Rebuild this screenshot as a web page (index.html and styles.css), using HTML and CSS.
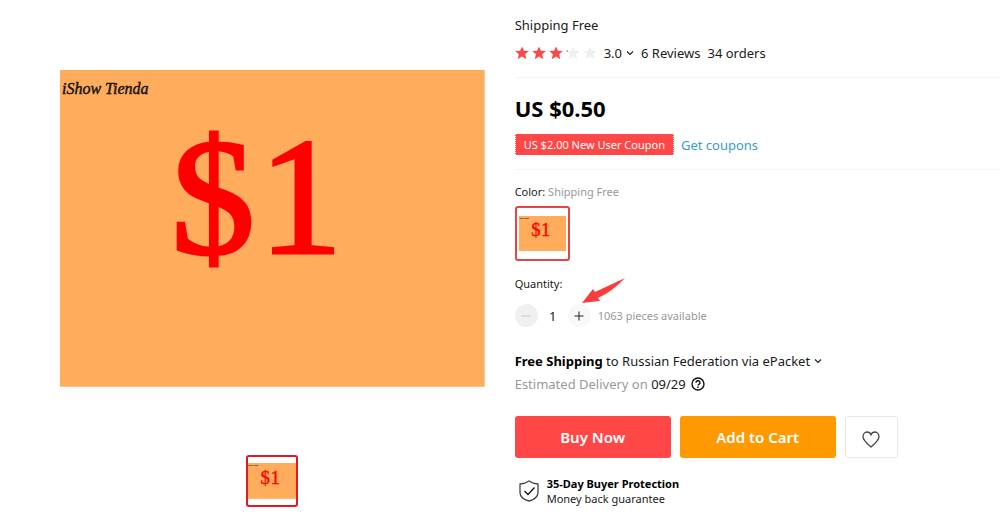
FILE: index.html
```html
<!DOCTYPE html>
<html lang="en">
<head>
	<meta charset="UTF-8">
	<meta name="viewport" content="width=device-width, initial-scale=1">
	<title>Shipping Free</title>
	<link rel="stylesheet" href="styles.css">
</head>
<body>
	<svg class="defs" aria-hidden="true">
		<symbol id="star" viewBox="0 0 14 14">
			<path d="M7 0.5l1.900 4.200 4.900 0.300-3.700 3.300 1.200 4.900L7 10.600l-4.300 2.600 1.200-4.900L0.200 5l4.900-0.300z"/>
		</symbol>
		<symbol id="down" viewBox="0 0 8 8">
			<path d="M1 2.5l3 3 3-3" fill="none" stroke="#222" stroke-width="1.2"/>
		</symbol>
	</svg>
	<main class="product">
		<section class="gallery">
			<svg class="picture" viewBox="0 0 425 317" role="img" aria-label="Shipping Free">
				<g id="card">
					<rect width="425" height="317" fill="#ffac5c"/>
					<text class="card-shop" x="2" y="24">iShow Tienda</text>
					<text class="card-price" x="111 199" y="183">$1</text>
				</g>
			</svg>
			<button class="thumb" aria-label="Picture 1"><svg viewBox="0 0 425 317"><use href="#card"/></svg></button>
		</section>
		<section class="info">
			<header class="block">
				<h1 class="title">Shipping Free</h1>
				<div class="rating">
					<div class="stars">
						<svg><use href="#star"/></svg>
						<svg><use href="#star"/></svg>
						<svg><use href="#star"/></svg>
						<svg class="off"><use href="#star"/><path class="part" d="M0 4.500h2v1.500z"/></svg>
						<svg class="off"><use href="#star"/></svg>
					</div>
					<button class="drop">3.0<svg><use href="#down"/></svg></button>
					<span>6 Reviews</span>
					<span>34 orders</span>
				</div>
			</header>
			<div class="block offer">
				<div class="price">US $0.50</div>
				<div class="coupons">
					<span class="coupon">US $2.00 New User Coupon</span>
					<a href="#">Get coupons</a>
				</div>
			</div>
			<div class="label">Color: <span class="gray">Shipping Free</span></div>
			<button class="swatch" aria-label="Shipping Free"><svg viewBox="0 0 425 317"><use href="#card"/></svg></button>
			<label class="label" for="count">Quantity:</label>
			<div class="quantity">
				<button class="step minus" aria-label="Less" disabled>
					<svg viewBox="0 0 10 10"><path d="M0 5h10"/></svg>
				</button>
				<input id="count" class="count" type="text" value="1">
				<button class="step" aria-label="More">
					<svg viewBox="0 0 10 10"><path d="M0.5 5h9M5 0.5v9"/></svg>
				</button>
				<span class="stock">1063 pieces available</span>
				<svg class="arrow" viewBox="0 0 44 26"><path d="M0 25L11 11l2 3L43 0Q31 13 16 20l2 3z" fill="#fb3c3c"/></svg>
			</div>
			<div class="delivery">
				<button class="drop"><span><b>Free Shipping</b> to Russian Federation via ePacket</span><svg><use href="#down"/></svg></button>
				<div class="date">
					<span><span class="gray">Estimated Delivery on</span> 09/29</span>
					<svg viewBox="0 0 14 14" fill="none" stroke="#111" stroke-width="1.4">
						<circle cx="7" cy="7" r="6"/>
						<path d="M5 5.7a2 1.9 0 1 1 3 1.6c-.7.4-1 .6-1 1.3M7 9.6v1.3"/>
					</svg>
				</div>
			</div>
			<div class="actions">
				<button class="buy">Buy Now</button>
				<button class="cart">Add to Cart</button>
				<button class="wish" aria-label="Add to wish list">
					<svg viewBox="0 0 18 17"><path d="M9 16C5.500 13 1 9.500 1 5.500 1 3 2.800 1 5 1c1.800 0 3.300 1 4 2.700C9.700 2 11.200 1 13 1c2.200 0 4 2 4 4.500C17 9.500 12.500 13 9 16z"/></svg>
				</button>
			</div>
			<div class="protection">
				<svg viewBox="0 0 20 22"><path d="M10 1c2.500 1.800 5.500 2.700 9 3v9c0 4-4.500 7-9 8-4.500-1-9-4-9-8V4c3.500-.3 6.500-1.200 9-3z"/><path class="tick" d="M5.500 11l3.500 3.500 6.500-7"/></svg>
				<div><b>35-Day Buyer Protection</b><br>Money back guarantee</div>
			</div>
		</section>
	</main>
</body>
</html>
```
FILE: styles.css
```css
*{
	margin: 0;
	padding: 0;
	box-sizing: border-box;
}
body{
	background: #fff;
	color: #1a1a1a;
	font: 13px/20px "Noto Sans", "Open Sans", sans-serif;
}
button, input{
	font: inherit;
	color: inherit;
	border: 0;
	background: none;
}
button{
	cursor: pointer;
}
svg{
	display: block;
	flex: none;
}
b{
	color: #000;
}
.defs{
	position: absolute;
	width: 0;
	height: 0;
}
.card-shop{
	font: italic 16px "Liberation Serif", cursive;
	fill: #111;
	stroke: #111;
	stroke-width: 0.4px;
}
.card-price{
	font: 168px "Liberation Serif", serif;
	fill: #f00;
	stroke: #f00;
	stroke-width: 3px;
}
.product{
	display: grid;
	grid-template-columns: 7fr 8fr;
	column-gap: 30px;
	padding-left: 6%;
}
.gallery{
	padding-top: 70px;
}
.picture{
	width: 100%;
}
.thumb, .swatch{
	display: flex;
	align-items: center;
	border: 2px solid #dc1a22;
	border-radius: 3px;
}
.thumb{
	width: 52px;
	height: 52px;
	margin: 68px auto 0;
}
.thumb svg, .swatch svg{
	width: 100%;
}
.swatch{
	width: 55px;
	height: 55px;
	padding: 2px;
	margin: 4px 0 13px;
	border-color: #e64545;
}
.info{
	padding-top: 15px;
}
.block{
	border-bottom: 1px solid #f4f4f4;
	padding-bottom: 14px;
}
.title{
	font-size: 13px;
	font-weight: normal;
	margin-bottom: 8px;
}
.rating, .stars, .coupons, .quantity, .date, .actions, .protection{
	display: flex;
	align-items: center;
}
.rating{
	gap: 7px;
}
.stars{
	gap: 3px;
	fill: #ff4747;
}
.stars svg{
	width: 14px;
	height: 14px;
}
.stars .off{
	fill: #f0f0f0;
}
.stars .part{
	fill: #ff4747;
}
.drop{
	display: flex;
	align-items: center;
	gap: 4px;
}
.drop svg{
	width: 8px;
	height: 8px;
}
.offer{
	padding-top: 14px;
	margin-bottom: 12px;
}
.price{
	font-size: 22px;
	font-weight: bold;
	line-height: 32px;
	color: #000;
	margin-bottom: 10px;
}
.coupons{
	gap: 7px;
}
.coupons a{
	color: #3a9cc4;
	text-decoration: none;
}
.coupon{
	background: #ff4747;
	color: #fff;
	font-size: 11px;
	line-height: 21px;
	padding: 0 8px;
	border: dotted #fff;
	border-width: 0 1px;
}
.label{
	display: block;
	font-size: 11px;
}
.gray, .stock{
	color: #999;
}
.quantity{
	position: relative;
	margin: 10px 0 24px;
}
.step{
	display: flex;
	align-items: center;
	justify-content: center;
	width: 23px;
	height: 23px;
	border-radius: 50%;
	background: #f8f8f8;
}
.step svg{
	width: 10px;
	height: 10px;
	stroke: #222;
}
.minus{
	background: #f0f0f0;
}
.minus svg{
	stroke: #ccc;
}
.count{
	width: 30px;
	text-align: center;
}
.stock{
	font-size: 11px;
	margin-left: 7px;
}
.arrow{
	position: absolute;
	left: 67px;
	bottom: 23px;
	width: 44px;
	height: 26px;
}
.delivery{
	display: grid;
	gap: 3px;
	margin-bottom: 22px;
}
.date{
	gap: 5px;
}
.date svg{
	width: 14px;
	height: 14px;
}
.actions{
	gap: 9px;
	margin-bottom: 18px;
}
.actions button{
	width: 156px;
	height: 42px;
	border-radius: 3px;
	color: #fff;
	font-size: 15px;
	font-weight: 600;
}
.actions .buy{
	background: #ff4747;
}
.actions .cart{
	background: #ff9900;
}
.actions .wish{
	display: flex;
	align-items: center;
	justify-content: center;
	width: 53px;
	border: 1px solid #e8e8e8;
}
.wish svg{
	width: 18px;
	height: 17px;
	margin-top: 4px;
}
.wish svg, .protection svg{
	fill: none;
	stroke: #444;
	stroke-width: 1.3px;
}
.protection{
	gap: 8px;
	padding-left: 4px;
	font-size: 11px;
	line-height: 15px;
}
.protection svg{
	width: 20px;
	height: 22px;
}
.protection .tick{
	stroke: #111;
}
```
